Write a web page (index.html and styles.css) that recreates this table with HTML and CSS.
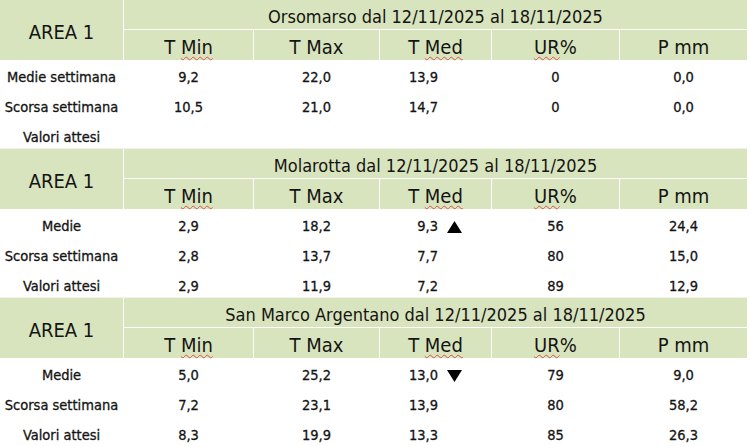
FILE: index.html
```html
<!DOCTYPE html>
<html lang="it">
<head>
<meta charset="utf-8">
<link rel="stylesheet" href="styles.css">
</head>
<body>
<div class="sheet">
  <section class="block">
    <div class="area">AREA 1</div>
    <div class="title">Orsomarso dal 12/11/2025 al 18/11/2025</div>
    <div class="hd">T <span class="sq">Min</span></div>
    <div class="hd">T Max</div>
    <div class="hd">T <span class="sq">Med</span></div>
    <div class="hd"><span class="sq">UR</span>%</div>
    <div class="hd">P mm</div>

    <div class="lbl">Medie settimana</div>
    <div class="v">9,2</div><div class="v">22,0</div>
    <div class="v med"><span class="num">13,9</span><span class="ar"></span></div>
    <div class="v">0</div><div class="v">0,0</div>

    <div class="lbl">Scorsa settimana</div>
    <div class="v">10,5</div><div class="v">21,0</div>
    <div class="v med"><span class="num">14,7</span><span class="ar"></span></div>
    <div class="v">0</div><div class="v">0,0</div>

    <div class="lbl">Valori attesi</div>
    <div class="v"></div><div class="v"></div>
    <div class="v med"><span class="num"></span><span class="ar"></span></div>
    <div class="v"></div><div class="v"></div>
  </section>

  <section class="block">
    <div class="area">AREA 1</div>
    <div class="title">Molarotta dal 12/11/2025 al 18/11/2025</div>
    <div class="hd">T <span class="sq">Min</span></div>
    <div class="hd">T Max</div>
    <div class="hd">T <span class="sq">Med</span></div>
    <div class="hd"><span class="sq">UR</span>%</div>
    <div class="hd">P mm</div>

    <div class="lbl">Medie</div>
    <div class="v">2,9</div><div class="v">18,2</div>
    <div class="v med"><span class="num">9,3</span><span class="ar"><svg class="tri" viewBox="0 0 15 12"><path d="M7.5 0L15 12H0Z"/></svg></span></div>
    <div class="v">56</div><div class="v">24,4</div>

    <div class="lbl">Scorsa settimana</div>
    <div class="v">2,8</div><div class="v">13,7</div>
    <div class="v med"><span class="num">7,7</span><span class="ar"></span></div>
    <div class="v">80</div><div class="v">15,0</div>

    <div class="lbl">Valori attesi</div>
    <div class="v">2,9</div><div class="v">11,9</div>
    <div class="v med"><span class="num">7,2</span><span class="ar"></span></div>
    <div class="v">89</div><div class="v">12,9</div>
  </section>

  <section class="block">
    <div class="area">AREA 1</div>
    <div class="title">San Marco Argentano dal 12/11/2025 al 18/11/2025</div>
    <div class="hd">T <span class="sq">Min</span></div>
    <div class="hd">T Max</div>
    <div class="hd">T <span class="sq">Med</span></div>
    <div class="hd"><span class="sq">UR</span>%</div>
    <div class="hd">P mm</div>

    <div class="lbl">Medie</div>
    <div class="v">5,0</div><div class="v">25,2</div>
    <div class="v med"><span class="num">13,0</span><span class="ar"><svg class="tri" viewBox="0 0 15 12"><path d="M0 0H15L7.5 12Z"/></svg></span></div>
    <div class="v">79</div><div class="v">9,0</div>

    <div class="lbl">Scorsa settimana</div>
    <div class="v">7,2</div><div class="v">23,1</div>
    <div class="v med"><span class="num">13,9</span><span class="ar"></span></div>
    <div class="v">80</div><div class="v">58,2</div>

    <div class="lbl">Valori attesi</div>
    <div class="v">8,3</div><div class="v">19,9</div>
    <div class="v med"><span class="num">13,3</span><span class="ar"></span></div>
    <div class="v">85</div><div class="v">26,3</div>
  </section>
</div>
</body>
</html>
```

FILE: styles.css
```css
html, body {
  margin: 0;
  padding: 0;
  background: #ffffff;
}

body {
  font-family: "DejaVu Sans Condensed", "DejaVu Sans", sans-serif;
  color: #141414;
}

.sheet {
  width: 747px;
  display: flex;
  flex-direction: column;
}

.block {
  display: grid;
  grid-template-columns: 123px 129px 125px 111px 127px 127px;
  grid-template-rows: 29px 30px 29px 29px 29px;
  column-gap: 1px;
  row-gap: 1px;
  background: #ffffff;
  border-bottom: 1px solid #f1f3ea;
  height: 149px;
  box-sizing: border-box;
}

.area {
  grid-row: 1 / 3;
  grid-column: 1;
  background: #d8e4bd;
  display: flex;
  align-items: center;
  justify-content: center;
  font-size: 20px;
  padding-top: 3px;
}

.title {
  grid-column: 2 / 7;
  grid-row: 1;
  background: #d8e4bd;
  text-align: center;
  font-size: 18px;
  line-height: 29px;
  padding-top: 2px;
  box-sizing: border-box;
}

.hd {
  background: #d8e4bd;
  text-align: center;
  font-size: 20px;
  line-height: 30px;
  padding-top: 2px;
  box-sizing: border-box;
  white-space: nowrap;
}

.sq {
  text-decoration: underline wavy #d9534f;
  text-decoration-thickness: 1px;
  text-underline-offset: 2px;
}

.lbl,
.v {
  text-align: center;
  font-size: 14.5px;
  line-height: 29px;
  padding-top: 2px;
  box-sizing: border-box;
  white-space: nowrap;
  -webkit-text-stroke: 0.3px #141414;
}

.v.med {
  display: grid;
  grid-template-columns: 58px 1fr;
  align-items: center;
}

.num {
  text-align: right;
}

.ar {
  display: flex;
  align-items: center;
  padding-left: 9px;
}

.tri {
  width: 15px;
  height: 12px;
  fill: #000000;
}
```
